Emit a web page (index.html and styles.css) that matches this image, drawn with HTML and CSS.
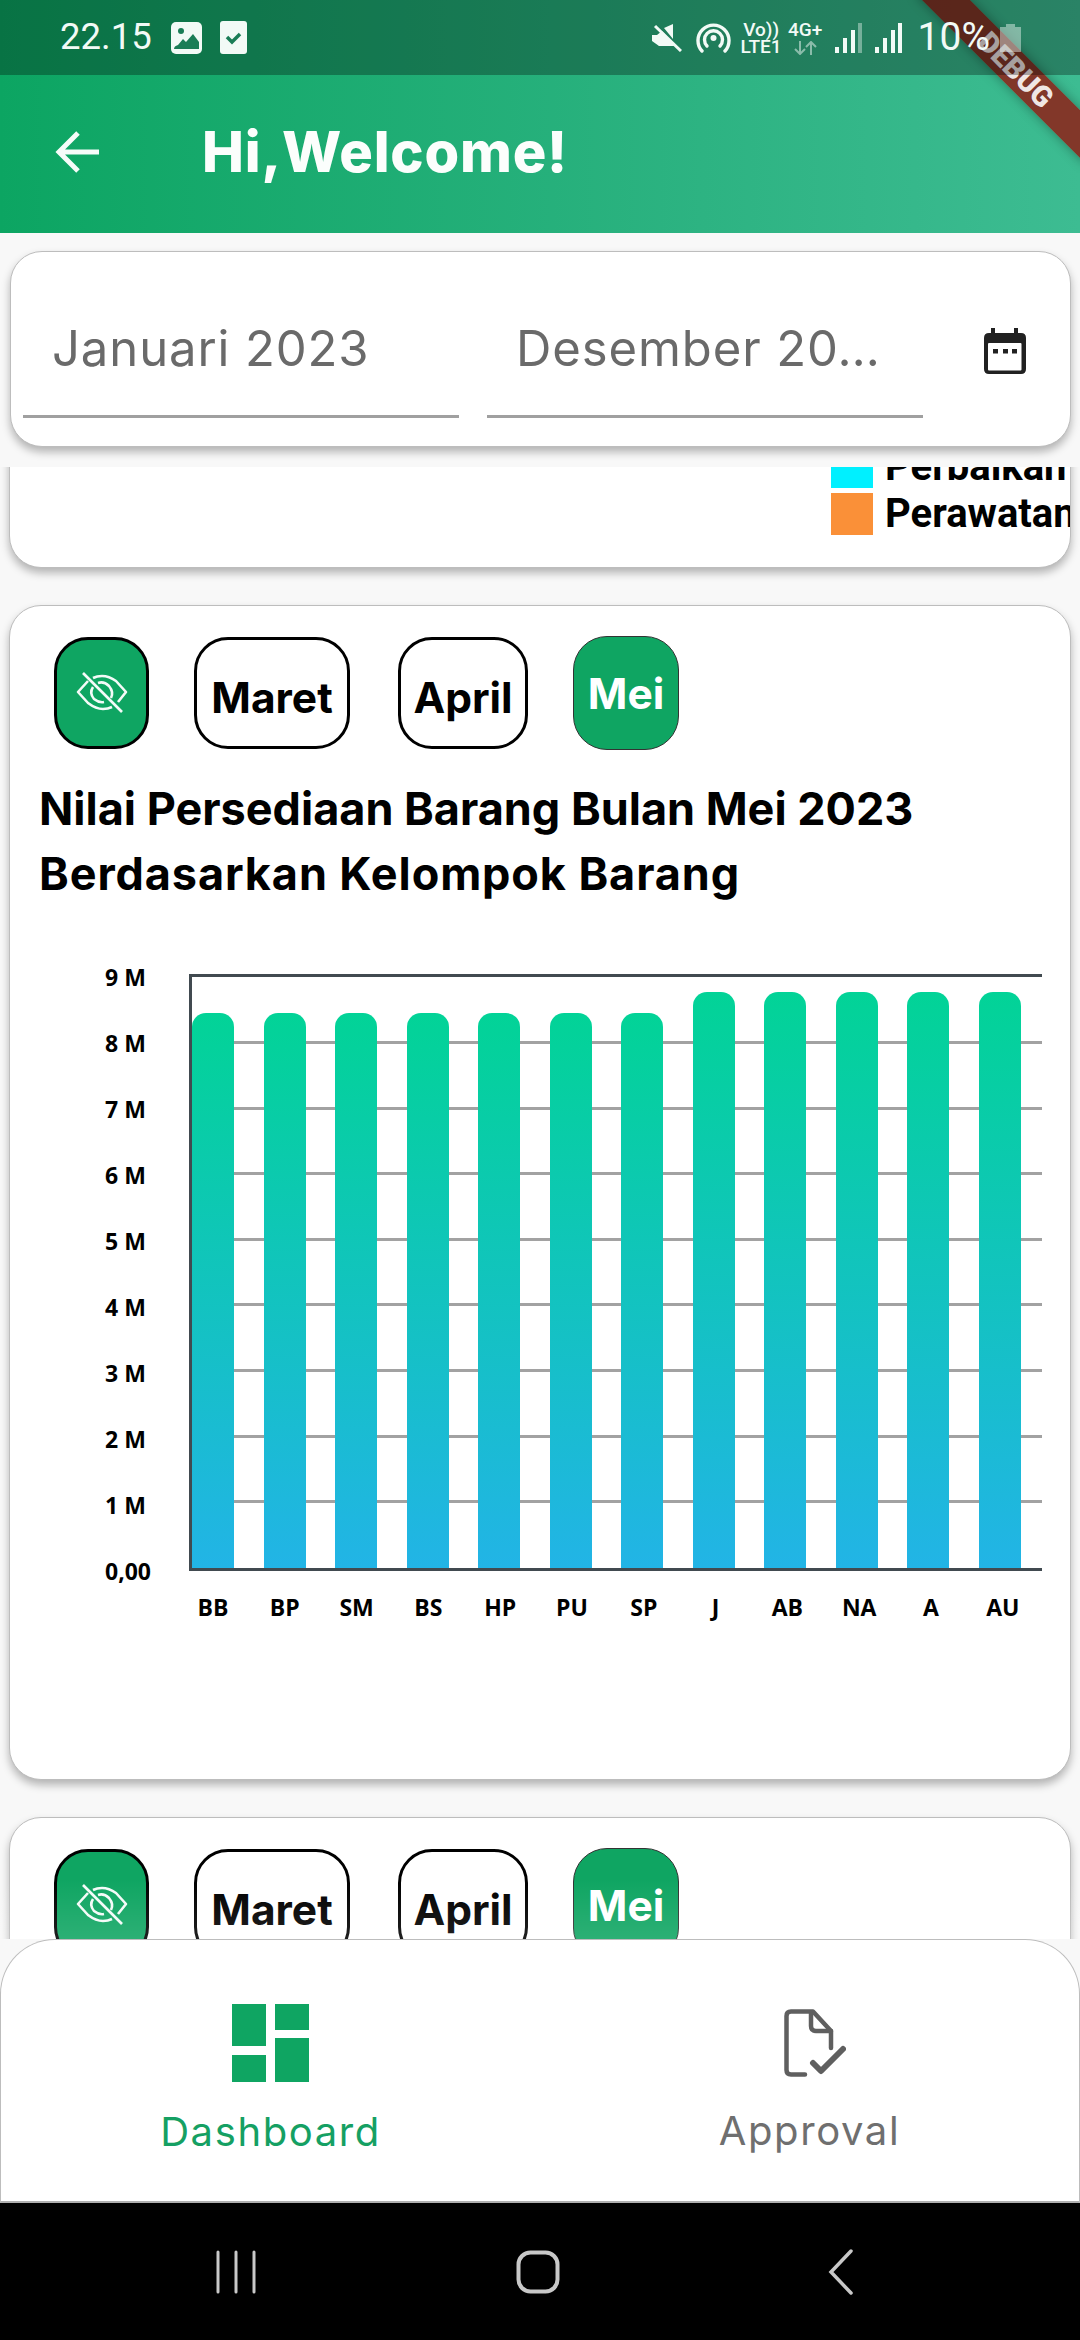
FILE: index.html
```html
<!DOCTYPE html>
<html lang="id">
<head>
<meta charset="utf-8">
<title>Dashboard</title>
<link rel="stylesheet" href="styles.css">
</head>
<body>
<div class="phone">
  <header class="header">
    <div class="status">
      <div class="status-left">
        <span class="clock">22.15</span>
        <svg class="ic-image" viewBox="0 0 31 32"><rect x="0" y="0" width="31" height="32" rx="5" fill="#f2faf6"/><circle cx="10" cy="9" r="3" fill="#1a7d56"/><path d="M3 27 Q3 24 7 23 L12 17 L15 20 L22 12 L28 20 V27Z" fill="#1a7d56"/></svg>
        <svg class="ic-check" viewBox="0 0 27 33"><rect x="0" y="0" width="27" height="33" rx="3" fill="#f2faf6"/><path d="M7 16 L12 21 L20 13" fill="none" stroke="#1a7d56" stroke-width="3.500"/></svg>
      </div>
      <div class="status-right">
        <svg class="ic-mute" viewBox="0 0 30 28"><path d="M0 11 H5 L10 7 L24 22 H7 L0 17Z M12 4 L21 0 V15Z" fill="#f2faf6"/><path d="M3 2 L29 27" stroke="#f2faf6" stroke-width="3"/></svg>
        <svg class="ic-hot" viewBox="0 0 35 30"><g fill="none" stroke="#f2faf6" stroke-width="3.400" stroke-linecap="round"><path d="M6 28 A15.500 15.500 0 1 1 29 28"/><path d="M11 23 A9 9 0 1 1 24 23"/></g><circle cx="17.500" cy="15" r="3" fill="#f2faf6"/></svg>
        <div class="net-col net-col-lte"><span class="net">Vo))<br>LTE1</span></div>
        <div class="net-col net-col-4g"><span class="net">4G+</span><svg class="ic-arrows" viewBox="0 0 23 14"><g fill="none" stroke="#f2faf6" stroke-width="2" opacity=".5"><path d="M6 0 V13 M1 8 L6 13 L11 8"/><path d="M17 14 V1 M12 6 L17 1 L22 6"/></g></svg></div>
        <svg class="ic-sig" viewBox="0 0 27 30"><g fill="#f2faf6"><rect x="0" y="24" width="4" height="6"/><rect x="8" y="15" width="4" height="15"/><rect x="16" y="7" width="4" height="23"/></g><rect x="23" y="0" width="4" height="30" fill="#f2faf6" opacity=".4"/></svg>
        <svg class="ic-sig" viewBox="0 0 27 30"><g fill="#f2faf6"><rect x="0" y="24" width="4" height="6"/><rect x="8" y="15" width="4" height="15"/><rect x="16" y="7" width="4" height="23"/><rect x="23" y="0" width="4" height="30"/></g></svg>
        <span class="percent">10%</span>
        <svg class="ic-batt" viewBox="0 0 21 28"><path d="M6 0 H15 V3 H21 V28 H0 V3 H6Z" fill="#f2faf6" opacity=".45"/></svg>
      </div>
    </div>
    <div class="appbar">
      <svg class="ic-back" viewBox="0 0 46 46"><path d="M44 23 H4 M23 4 L4 23 L23 42" fill="none" stroke="#f6fcf9" stroke-width="5"/></svg>
      <h1 class="app-title">Hi,Welcome!</h1>
    </div>
  </header>

  <div class="date-wrap">
    <div class="card date-card">
      <div class="date-field"><span class="date-text">Januari 2023</span></div>
      <div class="date-field"><span class="date-text">Desember 20…</span></div>
      <svg class="ic-cal" viewBox="0 0 42 46"><path d="M7 0 H11 V5 H30 V0 H34 V5 H37 Q42 5 42 10 V41 Q42 46 37 46 H5 Q0 46 0 41 V10 Q0 5 5 5 H7Z" fill="#212121"/><rect x="4" y="15" width="33.500" height="27.500" rx="1" fill="#fff"/><g fill="#212121"><rect x="9" y="21" width="5" height="4.500"/><rect x="19" y="21" width="5" height="4.500"/><rect x="28" y="21" width="5" height="4.500"/></g></svg>
    </div>
  </div>

  <main class="scroller">
    <section class="card legend-card">
      <ul class="legend">
        <li class="legend-item"><span class="swatch swatch-cyan"></span>Perbaikan</li>
        <li class="legend-item"><span class="swatch swatch-orange"></span>Perawatan</li>
      </ul>
    </section>

    <section class="card chart-card">
      <div class="months">
        <button class="pill pill-eye"><svg class="ic-eye" viewBox="0 0 52 42"><use href="#eye"/></svg></button>
        <button class="pill pill-maret">Maret</button>
        <button class="pill pill-april">April</button>
        <button class="pill pill-mei">Mei</button>
      </div>
      <h2 class="chart-title">Nilai Persediaan Barang Bulan Mei 2023<br><span class="title-second">Berdasarkan Kelompok Barang</span></h2>
      <div class="chart">
        <div class="y-axis">
          <span>9 M</span><span>8 M</span><span>7 M</span><span>6 M</span><span>5 M</span><span>4 M</span><span>3 M</span><span>2 M</span><span>1 M</span><span>0,00</span>
        </div>
        <div class="plot-col">
          <div class="plot">
            <div class="grid"><i></i><i></i><i></i><i></i><i></i><i></i><i></i><i></i></div>
            <div class="bars">
              <div class="bar low"></div><div class="bar low"></div><div class="bar low"></div><div class="bar low"></div><div class="bar low"></div><div class="bar low"></div><div class="bar low"></div>
              <div class="bar high"></div><div class="bar high"></div><div class="bar high"></div><div class="bar high"></div><div class="bar high"></div>
            </div>
          </div>
          <div class="x-axis">
            <span>BB</span><span>BP</span><span>SM</span><span>BS</span><span>HP</span><span>PU</span><span>SP</span><span>J</span><span>AB</span><span>NA</span><span>A</span><span>AU</span>
          </div>
        </div>
      </div>
    </section>

    <section class="card chart-card">
      <div class="months">
        <button class="pill pill-eye"><svg class="ic-eye" viewBox="0 0 52 42"><use href="#eye"/></svg></button>
        <button class="pill pill-maret">Maret</button>
        <button class="pill pill-april">April</button>
        <button class="pill pill-mei">Mei</button>
      </div>
    </section>
    <div class="scroll-fade"></div>
  </main>

  <nav class="bottom-nav">
    <div class="nav-item nav-active">
      <svg class="ic-dash" viewBox="0 0 77 78"><g fill="#0fa562"><rect x="0" y="0" width="34" height="42"/><rect x="0" y="51" width="34" height="27"/><rect x="43" y="0" width="34" height="26"/><rect x="43" y="34" width="34" height="44"/></g></svg>
      <span class="nav-label">Dashboard</span>
    </div>
    <div class="nav-item">
      <svg class="ic-appr" viewBox="0 0 62 68"><g fill="none" stroke="#5f5f5f" stroke-width="4.500" stroke-linecap="round" stroke-linejoin="round"><path d="M21 65.500 H7 Q2.500 65.500 2.500 61 V7 Q2.500 2.500 7 2.500 H29 L47 22 V39"/><path d="M27 4 V17 Q27 22 32 22 H47"/></g><path d="M29 54 L37 62 L59 40" fill="none" stroke="#5f5f5f" stroke-width="6" stroke-linecap="round" stroke-linejoin="round"/></svg>
      <span class="nav-label">Approval</span>
    </div>
  </nav>

  <div class="sys-nav">
    <svg class="ic-recent" viewBox="0 0 40 44"><g stroke="#c8c8c8" stroke-width="3" stroke-linecap="round"><path d="M2 2 V42 M20 2 V42 M38 2 V42"/></g></svg>
    <svg class="ic-home" viewBox="0 0 44 44"><rect x="2.500" y="2.500" width="39" height="39" rx="12" fill="none" stroke="#c8c8c8" stroke-width="4"/></svg>
    <svg class="ic-navback" viewBox="0 0 26 46"><path d="M23 2 L3 23 L23 44" fill="none" stroke="#c8c8c8" stroke-width="3.500" stroke-linecap="round"/></svg>
  </div>

  <div class="banner"><span>DEBUG</span></div>

  <svg class="defs" width="0" height="0"><defs>
    <g id="eye" fill="none" stroke="#f4fbf8" stroke-width="2.600" stroke-linejoin="round">
      <path d="M12 9 L2 20 L12 31 Q20 37 27 37 Q32 37 36 35 M42 30 L50 20 L40 9 Q33 4 26 4 Q21 4 17 6"/>
      <path d="M17 15 Q13 21 18 27 Q23 31 28 30 M35 26 Q38 20 33 14 Q28 9 22 11"/>
      <path d="M7 1 L46 40"/>
    </g>
  </defs></svg>
</div>
</body>
</html>
```
FILE: styles.css
```css
* { box-sizing: border-box; }
html, body { margin: 0; padding: 0; }
body { font-family: "Inter", "Liberation Sans", sans-serif; background: #f8f8f8; }
.phone { position: relative; width: 1080px; height: 2340px; display: flex; flex-direction: column; overflow: hidden; background: #f8f8f8; }

.header { height: 233px; flex: none; background: linear-gradient(90deg, #0ca562 0%, #2db382 65%, #3dbc92 100%); }
.status { position: relative; z-index: 2; height: 75px; display: flex; justify-content: space-between; align-items: center; padding: 0 59px 0 60px; background: rgba(0, 0, 0, .3); color: #f2faf6; }
.status-left, .status-right { display: flex; align-items: center; }
.clock { font: 400 36.500px/1 "Roboto", sans-serif; }
.percent { font: 400 39px/1 "Roboto", sans-serif; margin-left: 16px; }
.ic-image { width: 31px; height: 32px; margin-left: 19px; }
.ic-check { width: 27px; height: 33px; margin-left: 18px; }
.ic-mute { width: 30px; height: 28px; flex: none; }
.ic-hot { width: 35px; height: 30px; margin-left: 14px; flex: none; }
.net-col { display: flex; flex-direction: column; align-items: center; flex: none; text-align: center; }
.net-col-lte { width: 39px; margin-left: 11px; }
.net-col-4g { width: 33px; margin-left: 8px; }
.net { font: 500 19px/17px "Roboto", sans-serif; white-space: nowrap; }
.ic-arrows { width: 23px; height: 14px; margin-top: 3px; }
.ic-sig { width: 27px; height: 30px; margin-left: 13px; flex: none; }
.ic-batt { width: 21px; height: 28px; margin-left: 10px; flex: none; }

.appbar { height: 158px; display: flex; align-items: center; padding: 0 0 4px 55px; gap: 101px; }
.ic-back { width: 46px; height: 46px; flex: none; }
.app-title { margin: 0; font: 800 56px/1 "Inter", sans-serif; letter-spacing: .8px; color: #fbfefc; }

.card { background: #fff; border: 1px solid #bdbdbd; border-radius: 32px; box-shadow: 0 5px 9px rgba(0, 0, 0, .28); }

.date-wrap { flex: none; height: 234px; padding: 18px 9px 0 10px; }
.date-card { height: 196px; display: flex; padding: 0 0 0 12px; gap: 28px; align-items: flex-start; position: relative; }
.date-field { width: 436px; height: 166px; border-bottom: 3px solid #a0a0a0; padding: 72px 0 0 29px; }
.date-text { font: 400 49px/1 "Inter", sans-serif; color: #6a6a6a; letter-spacing: .9px; white-space: nowrap; }
.ic-cal { width: 42px; height: 46px; flex: none; margin: 76px 0 0 33px; }

.scroller { flex: 1; min-height: 0; overflow: hidden; padding: 0 9px; display: flex; flex-direction: column; gap: 37px; position: relative; }
.legend-card { flex: none; height: 180px; margin-top: -79px; overflow: hidden; position: relative; }
.legend { position: absolute; left: 821px; top: 57px; margin: 0; padding: 0; list-style: none; display: flex; flex-direction: column; gap: 5px; }
.legend-item { display: flex; align-items: center; gap: 12px; height: 42px; font: 700 40px/1 "Roboto", sans-serif; color: #000; white-space: nowrap; }
.swatch { width: 42px; height: 42px; flex: none; }
.swatch-cyan { background: #00f0ff; }
.swatch-orange { background: #fa9038; }

.chart-card { flex: none; height: 1175px; padding: 31px 0 0 44px; }
.months { display: flex; align-items: center; height: 112px; }
.pill { border: 3px solid #000; background: #fff; color: #000; font: 700 42.500px/1 "Inter", sans-serif; height: 112px; border-radius: 34px; padding: 10px 0 0; display: flex; align-items: center; justify-content: center; flex: none; }
.pill-eye { width: 95px; background: #0fa562; padding: 0; }
.pill-maret { width: 156px; margin-left: 45px; }
.pill-april { width: 130px; margin-left: 48px; }
.pill-mei { width: 106px; height: 114px; margin-left: 45px; background: #0fa562; color: #fff; border-width: 1px; border-color: #333; padding: 3px 0 0; }
.ic-eye { width: 52px; height: 42px; }

.chart-title { margin: 27px 0 0 -15px; font: 700 45px/65px "Inter", sans-serif; color: #000; white-space: nowrap; }
.title-second { letter-spacing: .9px; }

.chart { display: flex; margin: 68px 0 0 0; }
.y-axis { width: 84px; margin-left: 51px; height: 624px; margin-top: -12px; flex: none; display: flex; flex-direction: column; justify-content: space-between; font: 700 23px/30px "Open Sans", sans-serif; color: #000; }
.y-axis span { display: block; height: 30px; white-space: nowrap; }
.plot-col { width: 853px; flex: none; }
.plot { position: relative; height: 597px; border-left: 3px solid #414a50; border-top: 3px solid #414a50; border-bottom: 3px solid #414a50; }
.grid { position: absolute; inset: 0; display: flex; flex-direction: column; gap: 62.600px; padding-top: 64px; }
.grid i { display: block; height: 3px; flex: none; background: #a2a2a2; }
.bars { position: absolute; left: 0; right: 21px; bottom: 0; top: 0; display: flex; justify-content: space-between; align-items: flex-end; }
.bar { width: 42px; background: linear-gradient(180deg, #02d397 0%, #22b4e6 100%); border-radius: 14px 14px 0 0; }
.bar.low { height: 555px; }
.bar.high { height: 576px; }
.x-axis { display: flex; margin-top: 21px; padding-left: 3px; }
.x-axis span { width: 71.800px; flex: none; text-align: center; padding-right: 29.800px; font: 700 23px/30px "Open Sans", sans-serif; color: #000; white-space: nowrap; display: flex; justify-content: center; }

.scroll-fade { position: absolute; left: 0; right: 0; bottom: 0; height: 60px; background: linear-gradient(180deg, rgba(255,255,255,0), rgba(255,255,255,.12)); }

.bottom-nav { flex: none; height: 264px; display: flex; background: #fff; border: 1px solid #bdbdbd; border-bottom: 2px solid #b0b0b0; border-radius: 55px 55px 0 0; padding: 64px 0 0 0; }
.nav-item { width: 540px; display: flex; flex-direction: column; align-items: center; color: #6f6f6f; position: relative; }
.nav-active { color: #15a063; }
.ic-dash { width: 77px; height: 78px; }
.ic-appr { width: 62px; height: 68px; margin: 5px 0 0 10px; }
.nav-label { font: 400 40px/1 "Inter", sans-serif; letter-spacing: 1.600px; margin-top: 30px; }
.nav-item + .nav-item .nav-label { margin-top: 34px; }

.sys-nav { flex: none; height: 137px; background: #000; display: flex; align-items: center; justify-content: space-between; padding: 0 226px 0 216px; }
.ic-recent { width: 40px; height: 44px; }
.ic-home { width: 44px; height: 44px; margin-right: 8px; }
.ic-navback { width: 26px; height: 46px; }

.banner { position: absolute; z-index: 1; left: 893px; top: 50px; width: 240px; height: 34px; padding-left: 8px; transform: rotate(45deg); background: rgba(150, 18, 12, .78); box-shadow: 0 0 12px rgba(0, 0, 0, .35); display: flex; align-items: center; justify-content: center; }
.banner span { font: 900 29px/1 "Roboto", sans-serif; color: rgba(255, 255, 255, .9); }
.defs { position: absolute; }
```
